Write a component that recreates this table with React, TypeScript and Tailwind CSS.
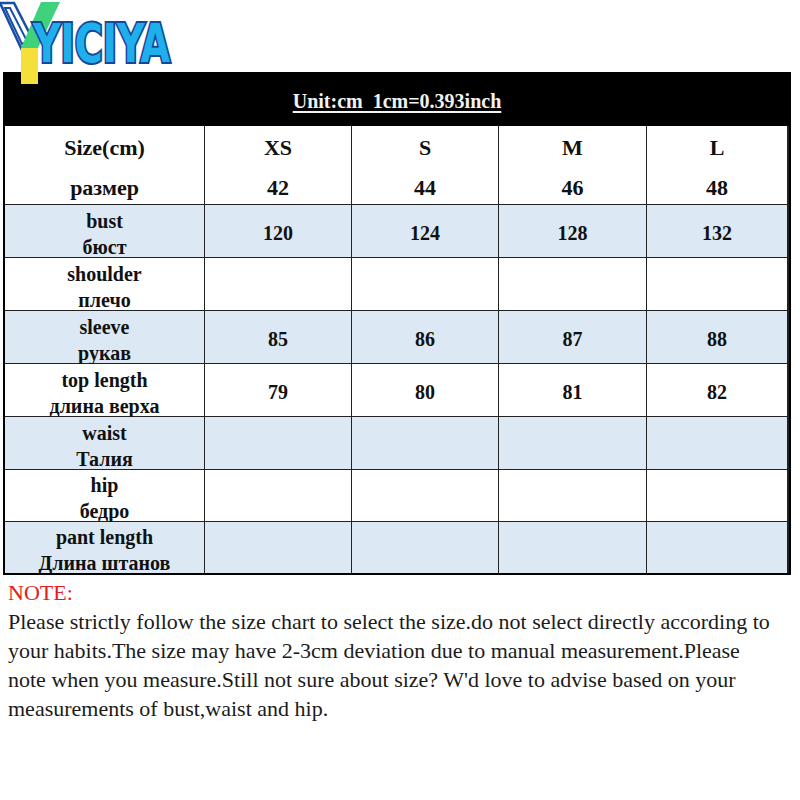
import React from 'react';

const serif = { fontFamily: '"Liberation Serif", "Times New Roman", serif' };

const sizes = [
  { name: 'XS', ru: '42' },
  { name: 'S', ru: '44' },
  { name: 'M', ru: '46' },
  { name: 'L', ru: '48' },
];

const rows = [
  { en: 'bust', ru: 'бюст', values: ['120', '124', '128', '132'] },
  { en: 'shoulder', ru: 'плечо', values: ['', '', '', ''] },
  { en: 'sleeve', ru: 'рукав', values: ['85', '86', '87', '88'] },
  { en: 'top length', ru: 'длина верха', values: ['79', '80', '81', '82'] },
  { en: 'waist', ru: 'Талия', values: ['', '', '', ''] },
  { en: 'hip', ru: 'бедро', values: ['', '', '', ''] },
  { en: 'pant length', ru: 'Длина штанов', values: ['', '', '', ''] },
];

const Logo = () => (
  <svg width="240" height="90" viewBox="0 0 240 90" overflow="visible" className="absolute left-0 top-0 z-10">
    {/* left arm of the Y, double blue outline */}
    <polygon points="0,3 14,3 34,42 22,50" fill="#ffffff" stroke="#1a4fa8" strokeWidth="2.6" />
    <polygon points="5,8 10,8 27,41 22,44" fill="none" stroke="#1a4fa8" strokeWidth="2" />
    {/* green stroke */}
    <polygon points="41,2 60,2 38,48 21,48" fill="#3fd27c" />
    {/* yellow stem */}
    <rect x="21" y="48" width="17" height="36" fill="#f5e03a" />
    <text
      x="33"
      y="62"
      textLength="137"
      lengthAdjust="spacingAndGlyphs"
      fontFamily='"DejaVu Sans Condensed", "DejaVu Sans", sans-serif'
      fontWeight="bold"
      fontSize="53"
      fill="#1fb0ec"
      stroke="#15469a"
      strokeWidth="4"
      strokeLinejoin="miter"
      paintOrder="stroke"
    >
      YICIYA
    </text>
  </svg>
);

const App = () => {
  return (
    <div className="relative w-[800px] h-[800px] bg-white overflow-hidden text-[#111]" style={serif}>
      <Logo />

      <div className="h-[72px]" />

      <div className="ml-[3px] w-[788px] border-2 border-black">
        <div className="h-[52px] bg-black flex items-center justify-center">
          <span className="text-[20px] font-bold text-[#f2f2f2] underline underline-offset-[3px] whitespace-pre leading-none mt-[1px]">
            {'Unit:cm  1cm=0.393inch'}
          </span>
        </div>

        <div className="grid grid-cols-[199px_146px_146px_147px_140px] grid-rows-[78px_52px_52px_52px_52px_52px_51px_51px] gap-px bg-[#222]">
          <div className="bg-white flex flex-col items-center justify-center pt-[6px] font-bold text-[22px] leading-[40px]">
            <span>Size(cm)</span>
            <span>размер</span>
          </div>
          {sizes.map((s) => (
            <div key={s.name} className="bg-white flex flex-col items-center justify-center pt-[6px] font-bold text-[22px] leading-[40px]">
              <span>{s.name}</span>
              <span>{s.ru}</span>
            </div>
          ))}

          {rows.map((row, i) => {
            const bg = i % 2 === 0 ? 'bg-[#dce9f5]' : 'bg-white';
            return (
              <React.Fragment key={row.en}>
                <div className={`${bg} flex flex-col items-center justify-center pt-[5px] font-bold text-[20px] leading-[26px]`}>
                  <span>{row.en}</span>
                  <span>{row.ru}</span>
                </div>
                {row.values.map((v, j) => (
                  <div key={j} className={`${bg} flex items-center justify-center pt-[4px] font-bold text-[20px]`}>
                    {v}
                  </div>
                ))}
              </React.Fragment>
            );
          })}
        </div>
      </div>

      <div className="mt-[3px] px-[8px] text-[22px] leading-[29px] text-[#1b1b1b]">
        <div className="text-[#e0201c]">NOTE:</div>
        <p className="whitespace-nowrap">
          Please strictly follow the size chart to select the size.do not select directly according to
          <br />
          your habits.The size may have 2-3cm deviation due to manual measurement.Please
          <br />
          note when you measure.Still not sure about size? W'd love to advise based on your
          <br />
          measurements of bust,waist and hip.
        </p>
      </div>
    </div>
  );
};

export default App;
